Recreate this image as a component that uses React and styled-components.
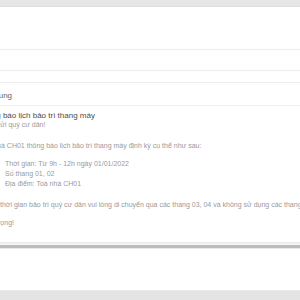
import React from "react";
import styled, { createGlobalStyle } from "styled-components";

const GlobalStyle = createGlobalStyle`
  body {
    margin: 0;
    background: #fff;
    font-family: "Liberation Sans", Arial, sans-serif;
  }
`;

function App() {
  return (
    <Page>
      <GlobalStyle />
      <TopBar />
      <Header />
      <FieldRow $height={20} />
      <FieldRow $height={11} />
      <LabelRow>
        <Shift>
          <Label>Nội dung</Label>
        </Shift>
      </LabelRow>
      <Editor>
        <Shift>
          <Title>Thông báo lịch bảo trì thang máy</Title>
          <Text>Kính gửi quý cư dân!</Text>
          <Text $gap={11}>
            Toà nhà CH01 thông báo lịch bảo trì thang máy định kỳ cụ thể như sau:
          </Text>
          <List>
            <li>Thời gian: Từ 9h - 12h ngày 01/01/2022</li>
            <li>Số thang 01, 02</li>
            <li>Địa điểm: Toà nhà CH01</li>
          </List>
          <Text $gap={11}>
            Trong thời gian bảo trì quý cư dân vui lòng di chuyển qua các thang 03, 04 và không sử dụng các thang đang bảo trì.
          </Text>
          <Text $gap={8}>Trân trọng!</Text>
        </Shift>
      </Editor>
      <ScrollTrack />
      <Body />
      <Footer />
    </Page>
  );
}

const Page = styled.div`
  width: 300px;
  height: 300px;
  overflow: hidden;
  display: flex;
  flex-direction: column;
`;

const TopBar = styled.div`
  height: 6px;
  flex: none;
  background: #e6e6e6;
  border-bottom: 1px solid #dcdcdc;
`;

const Header = styled.div`
  height: 42px;
  flex: none;
  border-bottom: 1px solid #ececec;
`;

const FieldRow = styled.div`
  height: ${(p) => p.$height}px;
  flex: none;
  border-bottom: 1px solid #ececec;
`;

const LabelRow = styled.div`
  height: 23px;
  flex: none;
  box-sizing: border-box;
  padding-top: 8px;
  border-bottom: 1px solid #efefef;
  overflow: hidden;
`;

const Shift = styled.div`
  margin-left: -20px;
  width: 340px;
`;

const Label = styled.div`
  font-size: 8px;
  line-height: 10px;
  color: #666;
  white-space: nowrap;
`;

const Editor = styled.div`
  height: 136px;
  flex: none;
  box-sizing: border-box;
  padding-top: 6px;
  overflow: hidden;
`;

const Title = styled.div`
  margin-left: -2px;
  font-size: 8px;
  line-height: 8px;
  color: #4c4c4c;
  white-space: nowrap;
`;

const Text = styled.p`
  margin: ${(p) => p.$gap || 0}px 0 0;
  font-size: 7px;
  line-height: 10px;
  color: #9a9a9a;
  white-space: nowrap;
`;

const List = styled.ul`
  margin: 8px 0 0;
  padding-left: 25px;
  font-size: 7px;
  line-height: 10px;
  color: #9a9a9a;
  white-space: nowrap;
`;

const ScrollTrack = styled.div`
  height: 7px;
  flex: none;
  box-sizing: border-box;
  border-top: 1px solid #e8e8e8;
  border-bottom: 1px solid #e9e9e9;
  background: linear-gradient(#f4f4f4 0 2px, #bdbdbd 2px);
`;

const Body = styled.div`
  flex: 1;
`;

const Footer = styled.div`
  height: 9px;
  flex: none;
  background: #e4e4e4;
  border-top: 1px solid #e9e9e9;
`;

export default App;
